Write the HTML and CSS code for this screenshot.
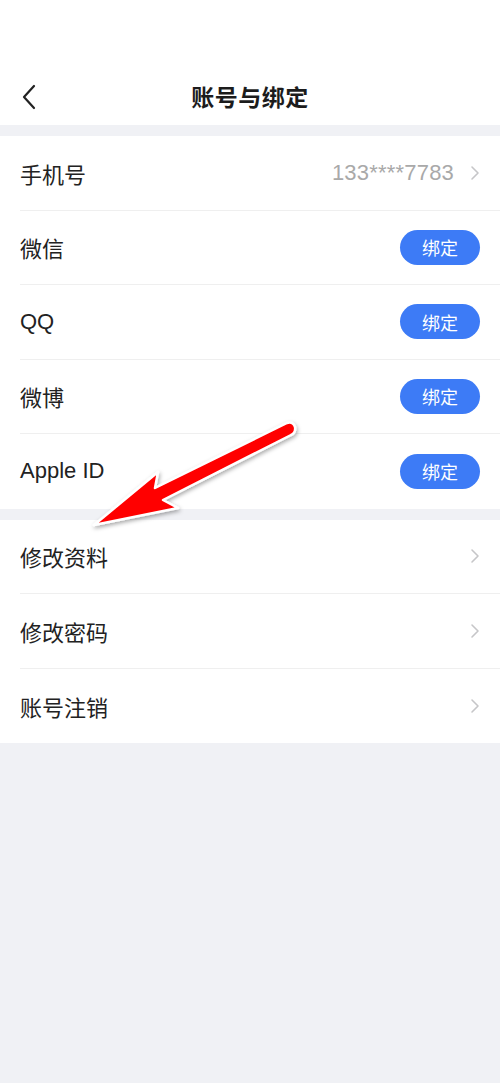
FILE: index.html
```html
<!DOCTYPE html>
<html lang="zh">
<head>
<meta charset="utf-8">
<link rel="stylesheet" href="styles.css">
</head>
<body>
<div class="page">
  <header class="header">
    <div class="nav">
      <svg class="back" width="16" height="26" viewBox="0 0 16 26"><path d="M13 2 L3 13 L13 24" fill="none" stroke="#222" stroke-width="2.2" stroke-linecap="round" stroke-linejoin="round"/></svg>
      <div class="title">账号与绑定</div>
    </div>
  </header>

  <section class="group">
    <div class="row">
      <span class="label">手机号</span>
      <span class="right"><span class="value">133****7783</span><svg class="chev" width="10" height="16" viewBox="0 0 10 16"><path d="M2 2 L8 8 L2 14" fill="none" stroke="#c6c6c8" stroke-width="1.6" stroke-linecap="round" stroke-linejoin="round"/></svg></span>
    </div>
    <div class="row">
      <span class="label">微信</span>
      <span class="btn">绑定</span>
    </div>
    <div class="row">
      <span class="label">QQ</span>
      <span class="btn">绑定</span>
    </div>
    <div class="row">
      <span class="label">微博</span>
      <span class="btn">绑定</span>
    </div>
    <div class="row">
      <span class="label">Apple ID</span>
      <span class="btn">绑定</span>
    </div>
  </section>

  <section class="group">
    <div class="row">
      <span class="label">修改资料</span>
      <svg class="chev" width="10" height="16" viewBox="0 0 10 16"><path d="M2 2 L8 8 L2 14" fill="none" stroke="#c6c6c8" stroke-width="1.6" stroke-linecap="round" stroke-linejoin="round"/></svg>
    </div>
    <div class="row">
      <span class="label">修改密码</span>
      <svg class="chev" width="10" height="16" viewBox="0 0 10 16"><path d="M2 2 L8 8 L2 14" fill="none" stroke="#c6c6c8" stroke-width="1.6" stroke-linecap="round" stroke-linejoin="round"/></svg>
    </div>
    <div class="row">
      <span class="label">账号注销</span>
      <svg class="chev" width="10" height="16" viewBox="0 0 10 16"><path d="M2 2 L8 8 L2 14" fill="none" stroke="#c6c6c8" stroke-width="1.6" stroke-linecap="round" stroke-linejoin="round"/></svg>
    </div>
  </section>

  <svg class="arrow" width="500" height="1083" viewBox="0 0 500 1083">
    <defs>
      <filter id="sh" x="-20%" y="-20%" width="140%" height="140%">
        <feDropShadow dx="1" dy="2" stdDeviation="2" flood-color="#000" flood-opacity="0.35"/>
      </filter>
    </defs>
    <path d="M94 525 L158 472 L155 488 L287 423 Q293 421 295 427 Q296 433 291 435 L163 500 L178 508 Z"
      fill="#ff0000" stroke="#ffffff" stroke-width="2.5" stroke-linejoin="round" filter="url(#sh)"/>
  </svg>
</div>
</body>
</html>
```

FILE: styles.css
```css
* { box-sizing: border-box; }
html, body { margin: 0; padding: 0; }
body {
  background: #f0f1f5;
  font-family: "PingFang SC", "Liberation Sans", "Noto Sans CJK SC", sans-serif;
  color: #222;
}
.page {
  position: relative;
  width: 500px;
  min-height: 1083px;
}
.header {
  background: #fff;
  height: 125px;
  padding-top: 68px;
}
.nav {
  position: relative;
  height: 57px;
  display: flex;
  align-items: center;
  justify-content: center;
}
.back {
  position: absolute;
  left: 21px;
  top: 16px;
}
.title {
  font-size: 23px;
  font-weight: bold;
  color: #1c1c1c;
  letter-spacing: 0.5px;
  margin-top: -1px;
}
.group {
  background: #fff;
  margin-top: 11px;
  padding-left: 20px;
}
.row {
  height: 74.5px;
  display: flex;
  align-items: center;
  justify-content: space-between;
  padding-right: 20px;
  border-bottom: 1px solid #efefef;
}
.row:last-child { border-bottom: none; }
.label {
  font-size: 22px;
  color: #222;
}
.right {
  display: flex;
  align-items: center;
}
.value {
  font-size: 22px;
  color: #a9a9a9;
  margin-right: 16px;
  letter-spacing: 0.2px;
}
.chev { display: block; margin-right: 0; }
.btn {
  width: 80px;
  height: 35px;
  border-radius: 18px;
  background: #3d7bf6;
  color: #fff;
  font-size: 18px;
  display: flex;
  align-items: center;
  justify-content: center;
}
.arrow {
  position: absolute;
  left: 0;
  top: 0;
  pointer-events: none;
}
```
